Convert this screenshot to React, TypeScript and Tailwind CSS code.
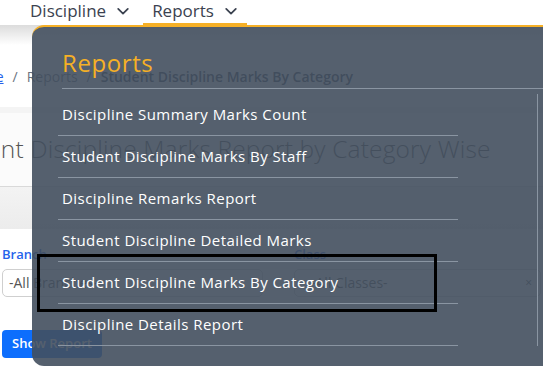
import React from 'react';

const reportLinks = [
  'Discipline Summary Marks Count',
  'Student Discipline Marks By Staff',
  'Discipline Remarks Report',
  'Student Discipline Detailed Marks',
  'Student Discipline Marks By Category',
  'Discipline Details Report',
];

const Chevron = () => (
  <svg viewBox="0 0 16 16" className="h-[14px] w-[14px]" fill="none" stroke="currentColor" strokeWidth="2" strokeLinecap="round" strokeLinejoin="round">
    <path d="M2.5 5.5 8 11l5.5-5.5" />
  </svg>
);

const App: React.FC = () => {
  return (
    <div className="relative h-[377px] w-[543px] overflow-hidden bg-white font-['Open_Sans',sans-serif]">
      {/* top nav */}
      <div className="flex h-[25px] items-start gap-[13px] pl-[30px]">
        <div className="flex h-[25px] items-center gap-[10px] pb-[3px] text-[17px] text-[#3b4250]">
          <span>Discipline</span>
          <Chevron />
        </div>
        <div className="flex h-[25px] items-center gap-[10px] border-b-2 border-[#f6b026] px-[9px] pb-[1px] text-[17px] text-[#3b4250]">
          <span>Reports</span>
          <Chevron />
        </div>
      </div>

      {/* page behind the menu */}
      <div className="h-[20px] bg-gradient-to-b from-[#dcdcdc] to-white" />
      <div className="-ml-[36px] flex h-[62px] items-center gap-[9px] text-[14px] text-[#6b7280]">
        <span className="text-[#2563eb] underline">Home</span>
        <span>/</span>
        <span>Reports</span>
        <span>/</span>
        <span className="font-semibold text-[#374151]">Student Discipline Marks By Category</span>
      </div>
      <div className="h-[6px] bg-[#f4f4f4]" />
      <div className="flex h-[74px] items-center border-b border-[#d9d9d9] bg-[#fbfbfb]">
        <h1 className="-ml-[64px] whitespace-nowrap text-[24.5px] font-light tracking-[0.15px] text-[#555]">Student Discipline Marks Report by Category Wise</h1>
      </div>
      <div className="h-[42px] bg-gradient-to-b from-[#f3f3f3] to-[#ececec]" />
      <div className="px-[2px] pt-[16px]">
        <div className="grid grid-cols-[261px_1fr] gap-[31px]">
          <div>
            <div className="text-[13px] font-semibold text-[#2563eb]">Branch</div>
            <div className="mt-[4px] flex h-[28px] items-center rounded-[5px] border border-[#cfcfcf] px-[6px] text-[14px] text-[#555]">-All Branches-</div>
          </div>
          <div>
            <div className="text-[13px] font-semibold text-[#2563eb]">Class</div>
            <div className="mt-[4px] flex h-[28px] items-center justify-between rounded-[5px] border border-[#cfcfcf] pl-[16px] pr-[8px] text-[14px] text-[#555]">
              <span>-All Classes-</span>
              <span className="text-[12px]">×</span>
            </div>
          </div>
        </div>
        <button className="mt-[33px] h-[28px] rounded-[4px] bg-[#0d6efd] px-[10px] text-[13px] font-semibold text-white">Show Report</button>
      </div>

      {/* reports dropdown */}
      <div className="absolute left-[32px] top-[25px] h-[341px] w-[540px] rounded-l-[12px] border-t-2 border-[#f6b026] bg-[rgba(67,79,94,0.9)] pl-[26px]">
        <div className="flex h-[61px] items-end pb-[7px] pl-[4px] text-[24px] tracking-[0.6px] text-[#f6b026]">Reports</div>
        <div className="ml-[4px] border-t border-[#8a95a2]" />
        <div className="mt-[5px] w-[480px] border-r border-[#8a95a2]">
          {reportLinks.map(link => (
            <div key={link} className="flex h-[42px] w-[400px] items-center border-b border-[#8a95a2] pl-[4px] text-[15px] font-medium tracking-[0.45px] text-white">
              {link}
            </div>
          ))}
        </div>
      </div>

      {/* highlight box */}
      <div className="absolute left-[37px] top-[254px] h-[58px] w-[400px] border-[3px] border-black" />
    </div>
  );
};

export default App;
